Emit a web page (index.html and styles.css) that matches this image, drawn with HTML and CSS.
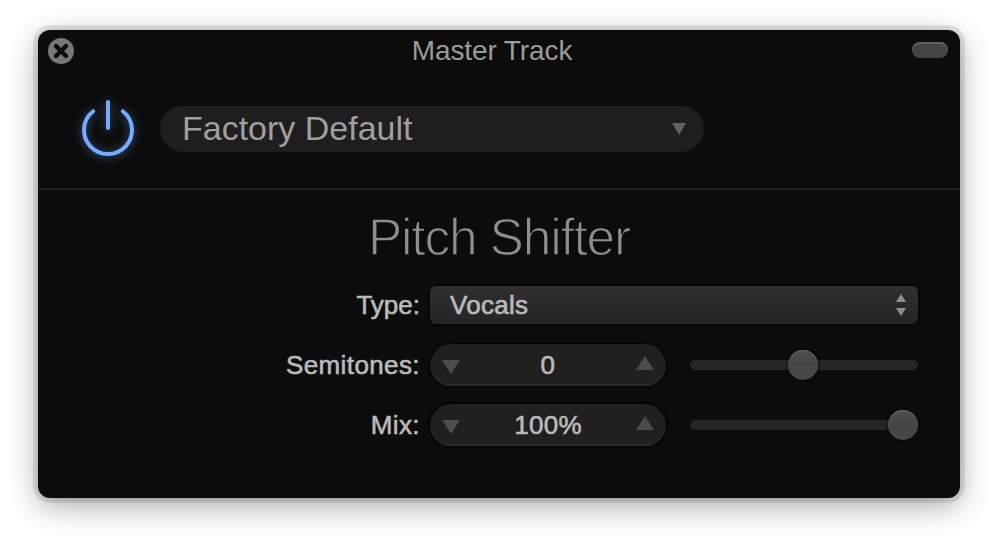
FILE: index.html
```html
<!DOCTYPE html>
<html lang="en">
<head>
    <meta charset="UTF-8">
    <title>Pitch Shifter</title>
    <link rel="stylesheet" href="styles.css">
</head>
<body>
    <div class="window">
        <div class="titlebar">
            <button class="close" aria-label="Close">
                <svg width="26" height="26" viewBox="0 0 26 26">
                    <circle cx="13" cy="13" r="13" fill="#787878"/>
                    <path d="M8 8L18 18M18 8L8 18" stroke="#0c0c0c" stroke-width="4.4" stroke-linecap="round"/>
                </svg>
            </button>
            <span class="title">Master Track</span>
            <button class="toggle" aria-label="Toggle header"></button>
        </div>
        <div class="preset-bar">
            <svg class="power" width="56" height="60" viewBox="0 0 56 60">
                <path d="M13.2 13.2A24 24 0 1 0 42.8 13.2" />
                <path d="M28 4V30" />
            </svg>
            <div class="preset">
                <span>Factory Default</span>
                <svg width="14" height="12"><path d="M0 0H14L7 12Z" fill="#616161"/></svg>
            </div>
        </div>
        <div class="plugin">
            <h1>Pitch Shifter</h1>
            <div class="controls">
                <label class="type-label">Type:</label>
                <div class="select">
                    <span>Vocals</span>
                    <svg width="10" height="22"><path d="M5 0L10 8H0ZM0 14H10L5 22Z" fill="#8e8e8e"/></svg>
                </div>

                <label class="semi-label">Semitones:</label>
                <div class="stepper">
                    <svg class="down" width="18" height="14"><path d="M0 0H18L9 14Z"/></svg>
                    <span class="value">0</span>
                    <svg class="up" width="18" height="14"><path d="M9 0L18 14H0Z"/></svg>
                </div>
                <div class="slider">
                    <div class="knob middle"></div>
                </div>

                <label class="mix-label">Mix:</label>
                <div class="stepper">
                    <svg class="down" width="18" height="14"><path d="M0 0H18L9 14Z"/></svg>
                    <span class="value">100%</span>
                    <svg class="up" width="18" height="14"><path d="M9 0L18 14H0Z"/></svg>
                </div>
                <div class="slider">
                    <div class="knob end"></div>
                </div>
            </div>
        </div>
    </div>
</body>
</html>
```
FILE: styles.css
```css
* {
    margin: 0;
    padding: 0;
    box-sizing: border-box;
}

body {
    width: 998px;
    height: 544px;
    padding: 30px 38px;
    background: #fff;
    font-family: "Liberation Sans", Arial, sans-serif;
    overflow: hidden;
}

svg {
    display: block;
}

button {
    border: none;
    background: none;
}

.window {
    width: 922px;
    height: 468px;
    border-radius: 12px;
    background: #0c0c0c;
    box-shadow: 0 0 0 1px rgba(0, 0, 0, 0.04), 0 0 0 4px rgba(0, 0, 0, 0.02), 0 0 0 5px rgba(0, 0, 0, 0.08), 0 8px 30px rgba(0, 0, 0, 0.34);
}

.titlebar {
    display: grid;
    grid-template-columns: 100px 1fr 100px;
    align-items: center;
    height: 40px;
    padding: 1px 12px 0 10px;
}

.close {
    width: 26px;
    height: 26px;
    margin-top: 1px;
}

.title {
    padding-right: 12px;
    font-size: 28px;
    line-height: 38px;
    letter-spacing: -0.1px;
    text-align: center;
    white-space: nowrap;
    color: #9b9b9b;
}

.toggle {
    justify-self: end;
    width: 36px;
    height: 16px;
    margin-bottom: 2px;
    border-radius: 8px;
    background: #444;
    box-shadow: inset 0 2px 1px #616161;
}

.preset-bar {
    display: flex;
    align-items: center;
    gap: 24px;
    height: 120px;
    padding: 0 42px;
    border-bottom: 2px solid #1e1e1e;
}

.power {
    margin-bottom: 2px;
    overflow: visible;
    fill: none;
    stroke: #73adff;
    stroke-width: 4;
    stroke-linecap: round;
    filter: drop-shadow(0 1px 5px rgba(115, 173, 255, 0.5));
}

.preset {
    display: flex;
    align-items: center;
    justify-content: space-between;
    width: 544px;
    height: 46px;
    padding: 0 18px 0 22px;
    border-radius: 23px;
    background: #1e1e1e;
    font-size: 34px;
    line-height: 44px;
    color: #9f9f9f;
}

.preset span {
    margin-bottom: 2px;
}

.plugin {
    padding: 17px 42px 0 0;
}

/* the outline in the background colour thins the strokes */
h1 {
    height: 60px;
    padding-left: 42px;
    font-size: 51.5px;
    font-weight: 400;
    line-height: 60px;
    letter-spacing: -1.2px;
    text-align: center;
    color: #8e8e8e;
    -webkit-text-stroke: 1.3px #0c0c0c;
}

.controls {
    display: grid;
    grid-template-columns: 382px 236px 228px;
    grid-template-rows: 40px 42px 42px;
    column-gap: 10px;
    row-gap: 18px;
    align-items: center;
    padding-top: 19px;
}

label,
.select,
.stepper {
    font-size: 26px;
    line-height: 38px;
    color: #bababa;
    -webkit-text-stroke: 0.6px #bababa;
}

label {
    text-align: right;
    white-space: nowrap;
    letter-spacing: 0.4px;
}

.type-label {
    align-self: start;
    letter-spacing: 0;
}

.select {
    grid-column: 2 / 4;
    align-self: start;
    display: flex;
    align-items: center;
    justify-content: space-between;
    width: 488px;
    height: 38px;
    padding: 0 12px 0 20px;
    border-radius: 6px;
    background: linear-gradient(#2f2f2f, #252525);
    box-shadow: 0 0 2px 1px #000;
    letter-spacing: 0.3px;
}

.stepper {
    display: flex;
    align-items: center;
    justify-content: space-between;
    width: 236px;
    height: 42px;
    padding: 0 12px;
    border-radius: 21px;
    background: #202020;
    box-shadow: 0 0 2px 1px #000, inset 0 -2px 1px #292929;
}

.stepper svg {
    fill: #4c4c4c;
}

.value {
    letter-spacing: 0.3px;
}

.down {
    margin-top: 4px;
}

.up {
    margin-bottom: 4px;
}

.slider {
    display: flex;
    align-items: center;
    width: 228px;
    height: 10px;
    margin-left: 14px;
    border-radius: 5px;
    background: #252525;
}

.knob {
    width: 30px;
    height: 30px;
    border-radius: 50%;
    background: linear-gradient(#505050, #444 50%, #4a4a4a);
    box-shadow: 0 0 2px 1px rgba(0, 0, 0, 0.6), inset 0 1px 1px #666;
}

.middle {
    margin-left: 98px;
}

.end {
    margin-left: 198px;
}
```
